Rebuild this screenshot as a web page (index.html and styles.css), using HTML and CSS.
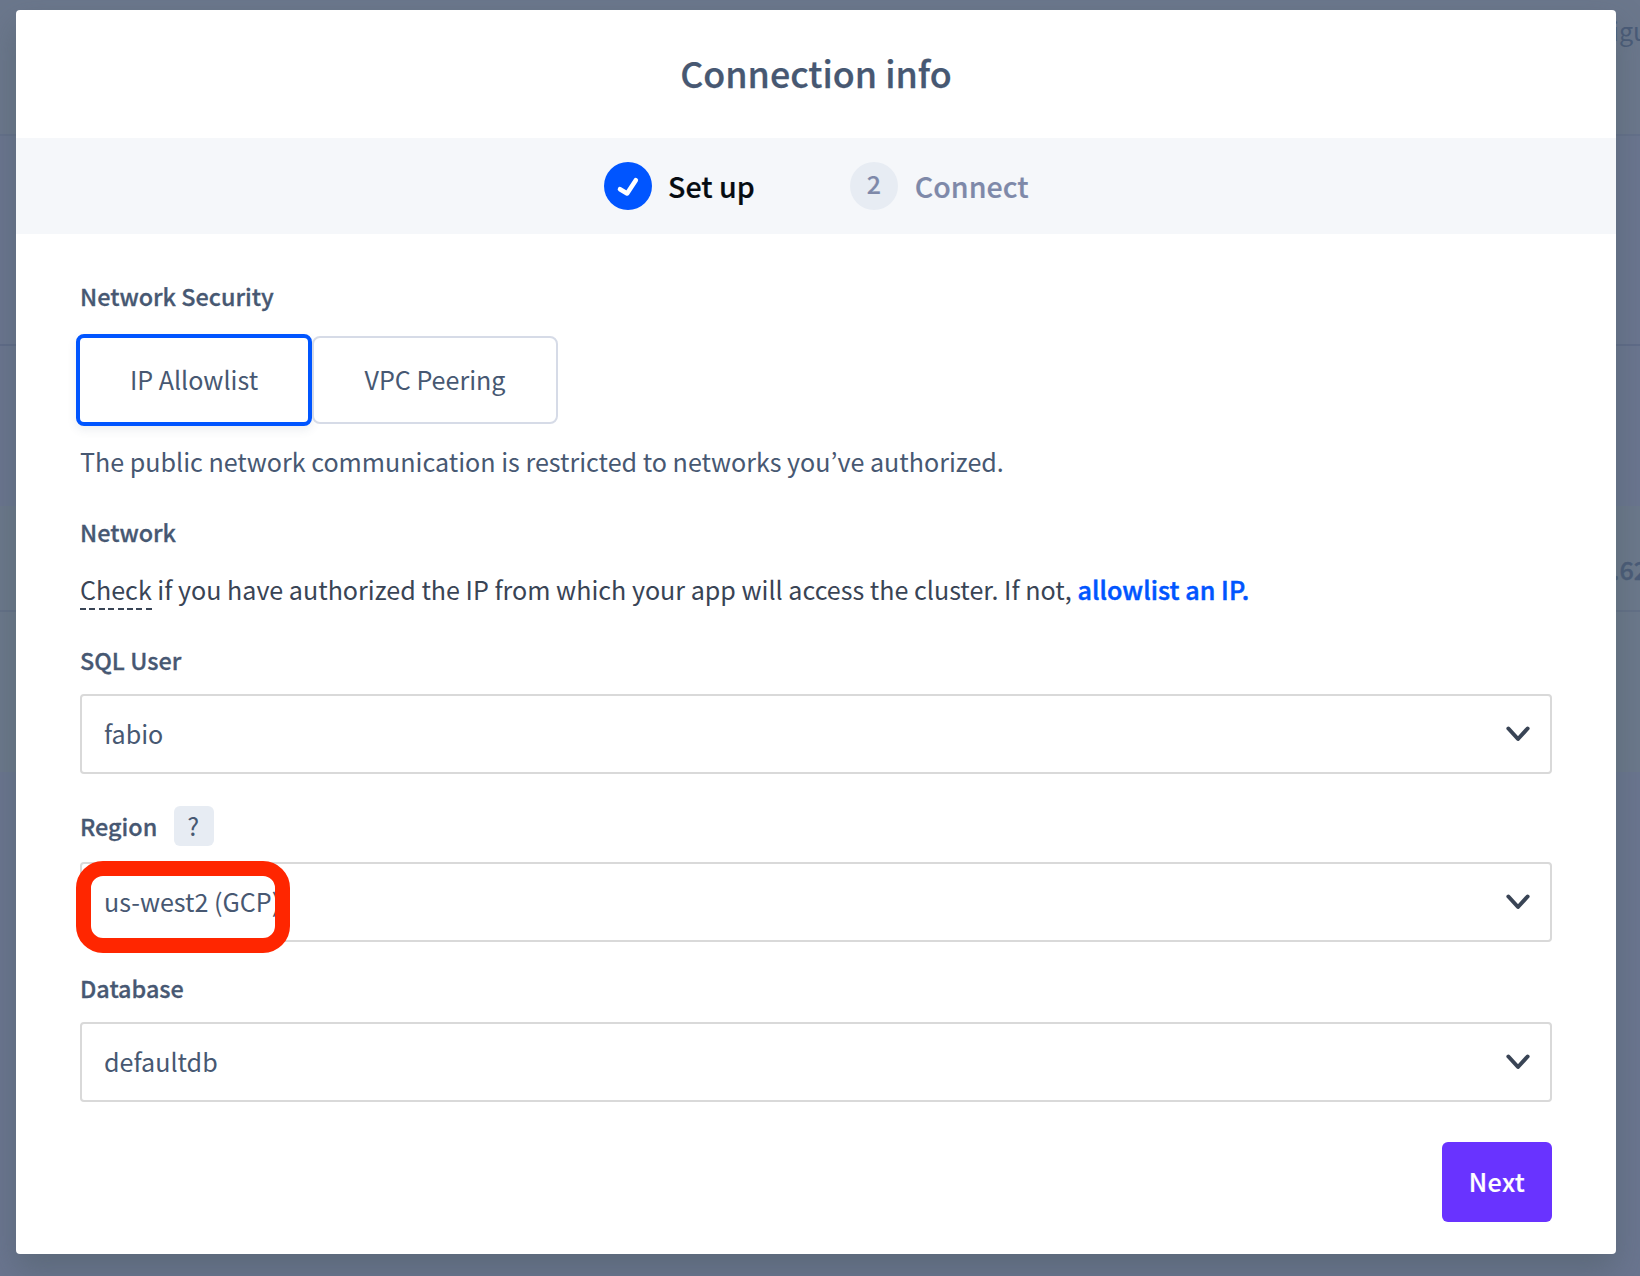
FILE: index.html
```html
<!DOCTYPE html>
<html lang="en">
<head>
<meta charset="utf-8">
<title>Connection info</title>
<link rel="stylesheet" href="styles.css">
</head>
<body>
<div class="page">
  <div class="band band-top"><span class="band-title">igu</span></div>
  <div class="band band-overview"></div>
  <div class="band band-gap"></div>
  <div class="band band-row"><span class="band-value">.62</span></div>
  <div class="band band-alt"></div>
  <div class="band band-rest"></div>
</div>

<main class="modal">
  <header class="modal-header"><h1 class="title">Connection info</h1></header>
  <nav class="steps">
    <div class="step step-active">
      <span class="step-badge"><svg width="48" height="48" viewBox="0 0 48 48" fill="none" stroke="#fff" stroke-width="4.6" stroke-linecap="round" stroke-linejoin="round"><path d="M16 27.2 23.1 31.4 31.8 18.2"/></svg></span>
      <span class="step-label">Set up</span>
    </div>
    <div class="step step-next">
      <span class="step-badge">2</span>
      <span class="step-label">Connect</span>
    </div>
  </nav>
  <form class="content">
    <h2 class="label">Network Security</h2>
    <div class="options">
      <button type="button" class="option selected">IP Allowlist</button>
      <button type="button" class="option">VPC Peering</button>
    </div>
    <p class="text description">The public network communication is restricted to networks you’ve authorized.</p>
    <h2 class="label network">Network</h2>
    <p class="text check"><span class="hint">Check</span> if you have authorized the IP from which your app will access the cluster. If not, <a class="link">allowlist an IP.</a></p>
    <h2 class="label sql">SQL User</h2>
    <div class="select"><span class="value">fabio</span><svg class="chevron" width="24" height="16" viewBox="0 0 24 16"><path d="M2.4 2.5 12 13 21.6 2.5"/></svg></div>
    <div class="region-row"><h2 class="label">Region</h2><span class="help">?</span></div>
    <div class="select region"><span class="value">us-west2 (GCP)</span><svg class="chevron" width="24" height="16" viewBox="0 0 24 16"><path d="M2.4 2.5 12 13 21.6 2.5"/></svg><i class="highlight"></i></div>
    <h2 class="label database">Database</h2>
    <div class="select"><span class="value">defaultdb</span><svg class="chevron" width="24" height="16" viewBox="0 0 24 16"><path d="M2.4 2.5 12 13 21.6 2.5"/></svg></div>
    <div class="actions"><button type="button" class="next">Next</button></div>
  </form>
</main>
</body>
</html>
```
FILE: styles.css
```css
* { box-sizing: border-box; }

body {
  margin: 0;
  width: 1640px;
  height: 1276px;
  position: relative;
  overflow: hidden;
  font-family: "Noto Sans CJK KR", "Noto Sans", sans-serif;
  font-size: 25.08px;
  color: #475872;
}

h1, h2, p { margin: 0; }
button { font: inherit; color: inherit; padding: 0; }

.page { display: flex; flex-direction: column; height: 1276px; }
.band { background: #6b778c; display: flex; padding-left: 1612px; overflow: hidden; white-space: nowrap; color: #4a5b78; }
.band-top { height: 136px; border-bottom: 2px solid #64708a; }
.band-overview { height: 210px; background: #6a758f; border-bottom: 2px solid #5f6b88; }
.band-gap { height: 160px; background: #6a758f; }
.band-row { height: 106px; background: #6b788b; border-bottom: 2px solid #637087; }
.band-alt { height: 160px; background: #6b788b; }
.band-rest { flex: 1; background: #6a758f; }
.band-title { line-height: 36px; margin-top: 12px; }
.band-value { font-weight: 500; line-height: 36px; margin-top: 45px; -webkit-text-stroke: .4px; }

.modal {
  position: absolute;
  left: 16px;
  top: 10px;
  width: 1600px;
  height: 1244px;
  border-radius: 4px;
  background: #fff;
  box-shadow: 0 16px 32px rgba(71, 88, 90, .4);
}
.modal-header { height: 128px; display: flex; justify-content: center; padding-top: 35px; }
.title { font-size: 35.8px; line-height: 54px; font-weight: 500; -webkit-text-stroke: .25px; }

.steps { height: 96px; background: #f5f7fa; display: flex; padding: 24px 0 24px 588px; gap: 95px; }
.step { display: flex; gap: 16px; color: #7e89a9; font-size: 28.6px; font-weight: 500; line-height: 48px; -webkit-text-stroke: .2px; }
.step-next { gap: 17px; }
.step-badge { width: 48px; height: 48px; border-radius: 50%; background: #e7ecf3; font-size: 25px; line-height: 43px; text-align: center; }
.step-badge svg { display: block; }
.step-active { color: #060c12; }
.step-active .step-badge { background: #0055ff; }

.content { padding: 46px 64px 0; }
.label { font-size: 23.4px; line-height: 32px; height: 32px; font-weight: 500; -webkit-text-stroke: .3px; }

.options { display: flex; align-items: center; margin: 22px 0 0 -4px; height: 92px; }
.option { width: 246px; height: 88px; border: 2px solid #d6dbe7; border-radius: 8px; background: #fff; padding-bottom: 2px; }
.option.selected { width: 236px; height: 92px; border: 4px solid #0055ff; box-shadow: 0 4px 10px rgba(71, 88, 114, .1); }

.text { line-height: 36px; white-space: nowrap; }
.description { margin-top: 17px; }
.network { margin-top: 37px; }
.check { margin-top: 23px; color: #394455; height: 36px; }
.hint { background: repeating-linear-gradient(90deg, #394455 0 6px, transparent 6px 9.4px) 0 100% / 100% 2px no-repeat; padding-bottom: 3px; }
.link { color: #0055ff; font-weight: 500; letter-spacing: .06px; -webkit-text-stroke: .5px; }
.sql { margin-top: 37px; }

.select {
  position: relative;
  height: 80px;
  border: 2px solid #d9d9d9;
  border-radius: 4px;
  display: flex;
  align-items: center;
  justify-content: space-between;
  padding: 0 20px 0 22px;
  margin-top: 18px;
}
.value { padding-bottom: 3px; }
.chevron { fill: none; stroke: #394455; stroke-width: 4; stroke-linecap: round; stroke-linejoin: round; }
.region-row { display: flex; gap: 17px; margin-top: 32px; height: 40px; align-items: center; }
.help { width: 40px; height: 40px; border-radius: 6px; background: #e7ecf3; text-align: center; line-height: 38px; padding-right: 2px; }
.region { margin-top: 16px; }
.highlight { position: absolute; left: -6px; top: -3px; width: 214px; height: 92px; border: 15px solid #ff2600; border-radius: 27px; }
.database { margin-top: 30px; }

.actions { display: flex; justify-content: flex-end; margin-top: 40px; }
.next { width: 110px; height: 80px; border: 0; border-radius: 6px; background: #6933ff; color: #fff; font-weight: 500; padding-bottom: 3px; letter-spacing: .4px; -webkit-text-stroke: .2px; }
```
